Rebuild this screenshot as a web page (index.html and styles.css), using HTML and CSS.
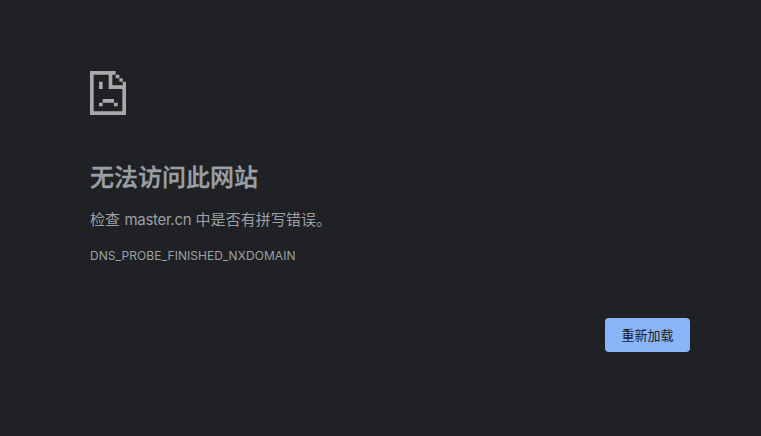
FILE: index.html
```html
<!DOCTYPE html>
<html lang="zh-CN">
<head>
<meta charset="utf-8">
<title>master.cn</title>
<link rel="stylesheet" href="styles.css">
</head>
<body>
<main class="error-page">
<svg class="icon" viewBox="0 0 108 132" aria-hidden="true"><path d="M0 0h77v11H67v32h41v89H0zM11 11v110h86V54H56V11zM77 11h11v11H77zM88 22h10v10H88zM98 32h10v11H98zM27 32h11v22H27zM38 84h34v11H38zM27 95h11v11H27zM72 95h11v11H72z" fill-rule="evenodd"/></svg>
<h1 class="title">无法访问此网站</h1>
<p class="summary">检查 <span class="host">master.cn</span> 中是否有拼写错误。</p>
<p class="code">DNS_PROBE_FINISHED_NXDOMAIN</p>
<div class="actions"><button class="reload" type="button">重新加载</button></div>
</main>
</body>
</html>
```

FILE: styles.css
```css
body {
  margin: 0;
  background: #202124;
  color: #9aa0a6;
  font-family: Inter, "Noto Sans CJK SC", sans-serif;
}
.error-page {
  display: flex;
  flex-direction: column;
  width: 600px;
  margin-left: 90px;
  padding-top: 71px;
}
.icon {
  width: 36px;
  height: 44px;
  fill: #a9a9a9;
}
.title {
  margin: 45px 0 0;
  font-size: 24px;
  line-height: 36px;
  font-weight: 500;
  -webkit-text-stroke: 0.35px currentColor;
}
.summary {
  margin: 12px 0 0;
  font-size: 15px;
  line-height: 24px;
  letter-spacing: 0.08px;
}
.host {
  letter-spacing: -0.3px;
}
.code {
  margin: 14px 0 0;
  font-size: 12px;
  line-height: 20px;
  letter-spacing: 0.07px;
}
.actions {
  display: flex;
  justify-content: flex-end;
  margin-top: 52px;
}
.reload {
  width: 85px;
  height: 34px;
  padding: 0 0 2px;
  border: 0;
  border-radius: 4px;
  background: #8ab4f8;
  color: #202124;
  font: 400 13px "Noto Sans CJK SC", sans-serif;
}
```
